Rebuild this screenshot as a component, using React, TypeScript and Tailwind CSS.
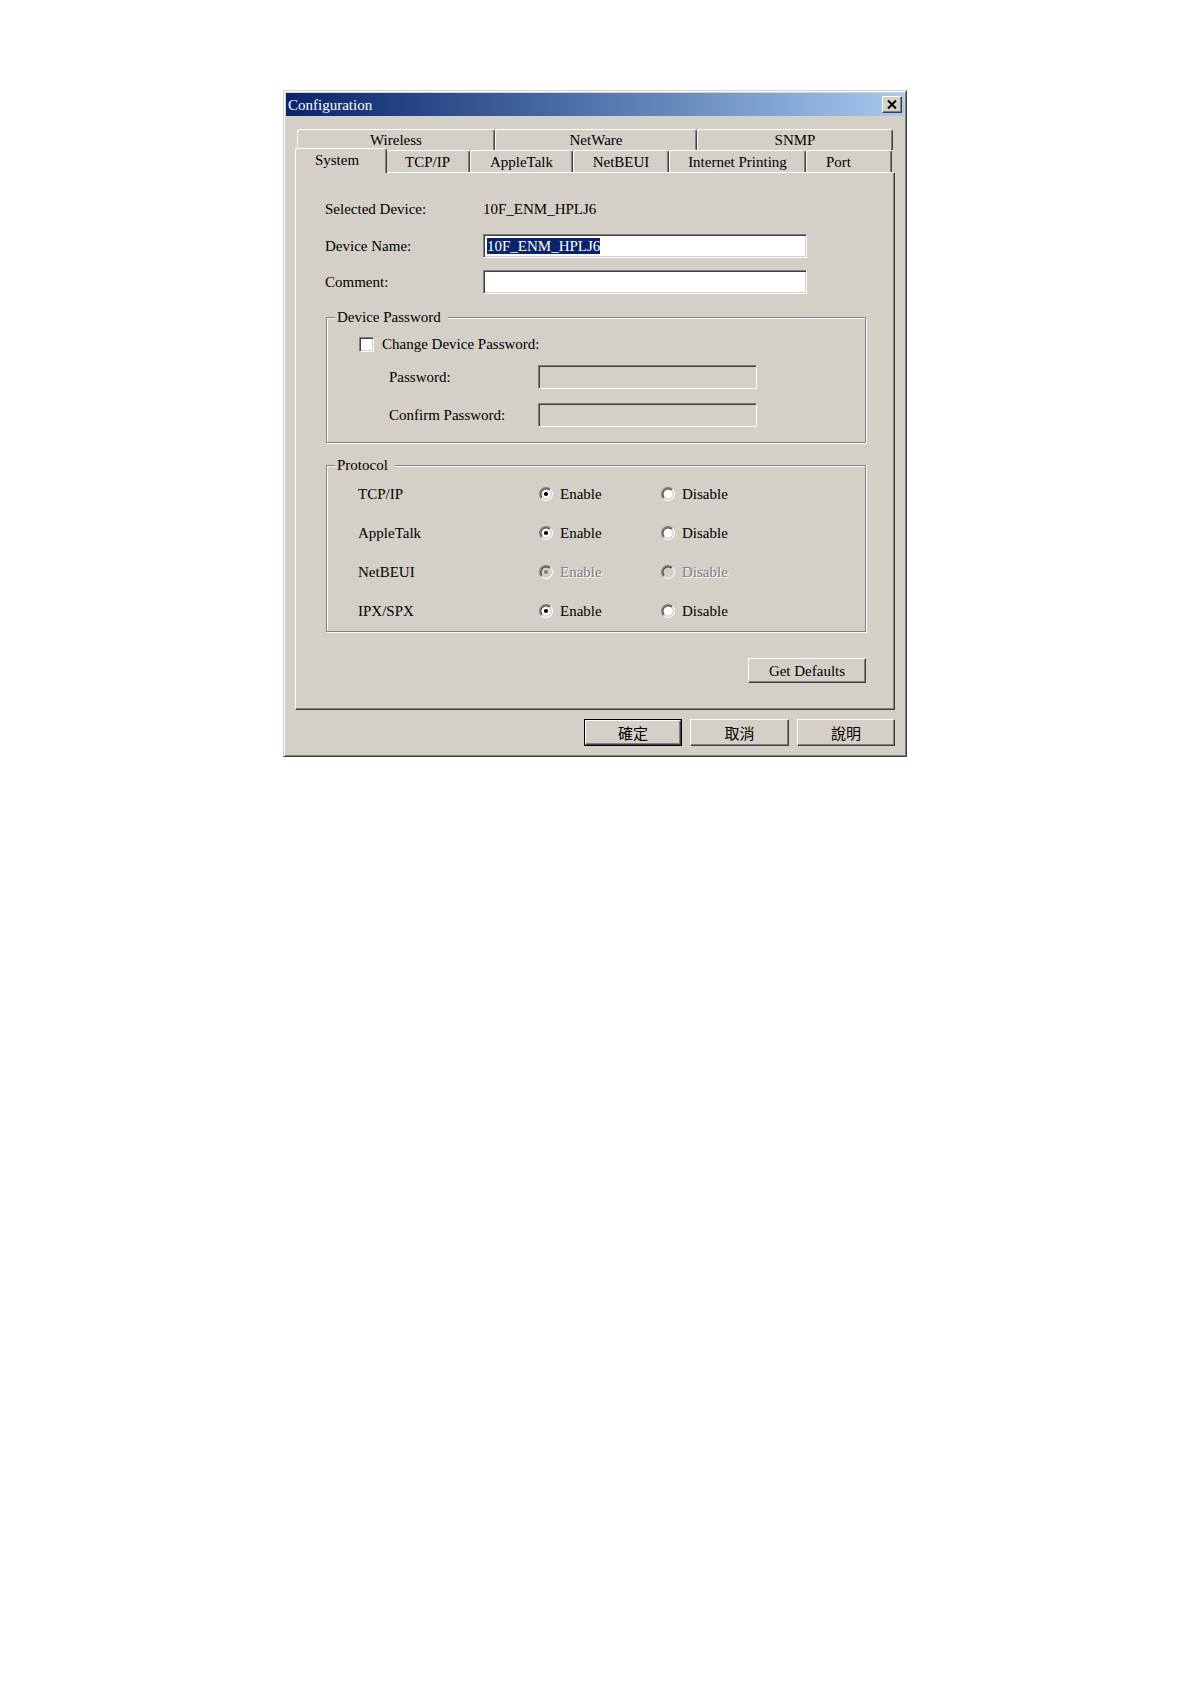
import React from 'react';

// classic 3D borders
const raised =
  'border border-t-white border-l-white border-r-[#404040] border-b-[#404040] shadow-[inset_-1px_-1px_0_#808080]';
const sunken =
  'border border-t-[#808080] border-l-[#808080] border-r-white border-b-white shadow-[inset_1px_1px_0_#404040,inset_-1px_-1px_0_#d4d0c8]';
const tabEdge =
  'border-t border-l border-r border-t-white border-l-white border-r-[#404040] shadow-[inset_-1px_0_0_#808080] rounded-tl-[3px] rounded-tr-[3px]';

const upperTabs = [
  { label: 'Wireless', w: 'w-[198px]' },
  { label: 'NetWare', w: 'w-[202px]' },
  { label: 'SNMP', w: 'w-[196px]' },
];

const lowerTabs = [
  { label: 'TCP/IP', w: 'w-[85px] justify-center' },
  { label: 'AppleTalk', w: 'w-[103px] justify-center' },
  { label: 'NetBEUI', w: 'w-[96px] justify-center' },
  { label: 'Internet Printing', w: 'w-[137px] justify-center' },
  { label: 'Port', w: 'w-[86px] justify-start pl-[19px]' },
];

const protocols = [
  { name: 'TCP/IP', disabled: false },
  { name: 'AppleTalk', disabled: false },
  { name: 'NetBEUI', disabled: true },
  { name: 'IPX/SPX', disabled: false },
];

const Radio: React.FC<{ checked: boolean; disabled?: boolean }> = ({ checked, disabled }) => (
  <svg width="14" height="14" viewBox="0 0 12 12" className="shrink-0">
    <circle cx="6" cy="6" r="4.5" fill={disabled ? '#d4d0c8' : '#ffffff'} />
    <path d="M2.11 9.89 A5.5 5.5 0 0 1 9.89 2.11" fill="none" stroke="#808080" strokeWidth="1" />
    <path d="M9.89 2.11 A5.5 5.5 0 0 1 2.11 9.89" fill="none" stroke="#ffffff" strokeWidth="1" />
    <path d="M2.82 9.18 A4.5 4.5 0 0 1 9.18 2.82" fill="none" stroke="#404040" strokeWidth="1" />
    <path d="M9.18 2.82 A4.5 4.5 0 0 1 2.82 9.18" fill="none" stroke="#d4d0c8" strokeWidth="1" />
    {checked && <circle cx="6" cy="6" r="1.8" fill={disabled ? '#808080' : '#000000'} />}
  </svg>
);

const RadioOption: React.FC<{ label: string; checked: boolean; disabled?: boolean; w?: string }> = ({
  label,
  checked,
  disabled,
  w = '',
}) => (
  <div className={`flex items-center gap-[7px] ${w}`}>
    <Radio checked={checked} disabled={disabled} />
    <span className={disabled ? 'text-[#808080] [text-shadow:1px_1px_0_#fff]' : ''}>{label}</span>
  </div>
);

const GroupBox: React.FC<{ title: string; className: string; children: React.ReactNode }> = ({
  title,
  className,
  children,
}) => (
  <div className={`border border-[#808080] shadow-[1px_1px_0_#fff,inset_1px_1px_0_#fff] ${className}`}>
    <div className="-mt-[9px] ml-[8px] w-fit pl-[2px] pr-[7px] bg-[#d4d0c8] leading-[16px]">{title}</div>
    {children}
  </div>
);

const Button: React.FC<{ label: string; w: string; h: string; isDefault?: boolean; cjk?: boolean }> = ({
  label,
  w,
  h,
  isDefault,
  cjk,
}) => {
  const inner = (
    <div
      className={`${raised} h-full w-full flex items-center justify-center ${
        cjk ? "font-['Noto_Sans_CJK_TC',sans-serif] text-[15px]" : ''
      }`}
    >
      {label}
    </div>
  );
  return isDefault ? (
    <div className={`${w} ${h} border border-black`}>{inner}</div>
  ) : (
    <div className={`${w} ${h}`}>{inner}</div>
  );
};

const App: React.FC = () => {
  return (
    <div className="min-h-[1682px] bg-white pt-[90px] pl-[283px] font-['Liberation_Serif','Times_New_Roman',serif] text-[15px] leading-[16px] text-black">
      <div className="w-[624px] bg-[#d4d0c8] border border-t-[#d4d0c8] border-l-[#d4d0c8] border-r-[#404040] border-b-[#404040] shadow-[inset_1px_1px_0_#fff,inset_-1px_-1px_0_#808080] p-[2px]">
        {/* title bar */}
        <div className="h-[23px] flex items-center justify-between bg-gradient-to-r from-[#0a246a] to-[#a6caf0] pl-[2px] pr-[2px]">
          <span className="text-white text-[15px]">Configuration</span>
          <div className={`w-[20px] h-[17px] bg-[#d4d0c8] ${raised} flex items-center justify-center`}>
            <svg width="10" height="9" viewBox="0 0 10 9">
              <path d="M1 0.5 L9 8.5 M9 0.5 L1 8.5" stroke="#000" strokeWidth="2" />
            </svg>
          </div>
        </div>

        <div className="px-[9px] pb-[8px]">
          {/* tab rows */}
          <div className="mt-[13px] ml-[2px] flex h-[21px]">
            {upperTabs.map((t) => (
              <div key={t.label} className={`${t.w} h-[21px] ${tabEdge} flex items-center justify-center`}>
                {t.label}
              </div>
            ))}
          </div>
          <div className="ml-[2px] flex items-start h-[22px]">
            <div
              className={`relative z-10 -ml-[2px] -mr-[2px] -mt-[2px] w-[92px] h-[25px] bg-[#d4d0c8] ${tabEdge} flex justify-center pt-[3px] pr-[8px]`}
            >
              System
            </div>
            {lowerTabs.map((t) => (
              <div key={t.label} className={`${t.w} h-[22px] ${tabEdge} flex items-center`}>
                {t.label}
              </div>
            ))}
          </div>

          {/* panel */}
          <div className="h-[538px] border border-t-white border-l-white border-r-[#404040] border-b-[#404040] shadow-[inset_-1px_-1px_0_#808080] pl-[29px] pr-[28px] pt-[24px]">
            <div className="flex items-center h-[24px]">
              <div className="w-[158px]">Selected Device:</div>
              <div>10F_ENM_HPLJ6</div>
            </div>
            <div className="flex items-center h-[24px] mt-[13px]">
              <div className="w-[158px]">Device Name:</div>
              <div className={`w-[324px] h-[24px] bg-white ${sunken} flex items-center px-[3px]`}>
                <span className="bg-[#0a246a] text-white leading-[16px]">10F_ENM_HPLJ6</span>
              </div>
            </div>
            <div className="flex items-center h-[24px] mt-[12px]">
              <div className="w-[158px]">Comment:</div>
              <div className={`w-[324px] h-[24px] bg-white ${sunken}`} />
            </div>

            <GroupBox title="Device Password" className="mt-[23px] ml-[1px] h-[126px]">
              <div className="mt-[9px] pl-[32px] flex items-center gap-[8px] h-[20px]">
                <div className={`w-[15px] h-[15px] bg-white ${sunken}`} />
                <span>Change Device Password:</span>
              </div>
              <div className="mt-[11px] pl-[62px] flex items-center h-[24px]">
                <div className="w-[149px]">Password:</div>
                <div className={`w-[219px] h-[24px] bg-[#d4d0c8] ${sunken}`} />
              </div>
              <div className="mt-[14px] pl-[62px] flex items-center h-[24px]">
                <div className="w-[149px]">Confirm Password:</div>
                <div className={`w-[219px] h-[24px] bg-[#d4d0c8] ${sunken}`} />
              </div>
            </GroupBox>

            <GroupBox title="Protocol" className="mt-[22px] ml-[1px] h-[167px]">
              <div className="mt-[11px] pl-[31px] flex flex-col gap-[19px]">
                {protocols.map((p) => (
                  <div key={p.name} className="flex items-center h-[20px]">
                    <div className="w-[181px]">{p.name}</div>
                    <RadioOption label="Enable" checked disabled={p.disabled} w="w-[122px]" />
                    <RadioOption label="Disable" checked={false} disabled={p.disabled} />
                  </div>
                ))}
              </div>
            </GroupBox>

            <div className="mt-[26px] flex justify-end">
              <Button label="Get Defaults" w="w-[118px]" h="h-[25px]" />
            </div>
          </div>

          {/* dialog buttons */}
          <div className="mt-[9px] flex justify-end gap-[8px]">
            <Button label="確定" w="w-[98px]" h="h-[27px]" isDefault cjk />
            <Button label="取消" w="w-[99px]" h="h-[27px]" cjk />
            <Button label="說明" w="w-[98px]" h="h-[27px]" cjk />
          </div>
        </div>
      </div>
    </div>
  );
};

export default App;
